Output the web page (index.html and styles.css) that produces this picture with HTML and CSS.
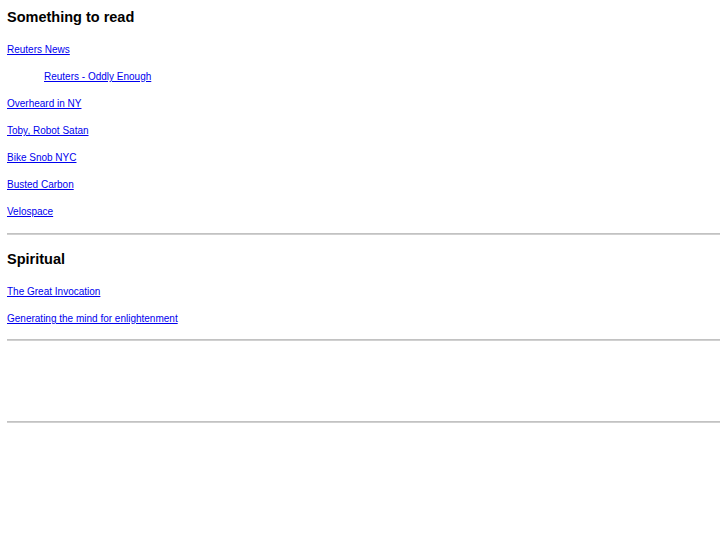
FILE: index.html
```html
<!DOCTYPE html>
<html lang="en">
<head>
    <meta charset="UTF-8">
    <meta name="viewport" content="width=device-width, initial-scale=1.0">
    <title>Links</title>
    <link rel="stylesheet" href="styles.css">
</head>
<body>
    <div class="section">
        <h2>Something to read</h2>
        <p><a href="#">Reuters News</a></p>
        <p class="sub"><a href="#">Reuters - Oddly Enough</a></p>
        <p><a href="#">Overheard in NY</a></p>
        <p><a href="#">Toby, Robot Satan</a></p>
        <p><a href="#">Bike Snob NYC</a></p>
        <p><a href="#">Busted Carbon</a></p>
        <p><a href="#">Velospace</a></p>
    </div>
    <hr>
    <div class="section">
        <h2>Spiritual</h2>
        <p><a href="#">The Great Invocation</a></p>
        <p><a href="#">Generating the mind for enlightenment</a></p>
    </div>
    <hr class="close">
    <div class="section empty"></div>
    <hr>
</body>
</html>
```

FILE: styles.css
```css
body {
    font-family: "Liberation Sans", Arial, sans-serif;
    margin: 9px 7px 8px;
    color: #000;
    background: #fff;
}
h2 {
    font-size: 14.5px;
    line-height: 17px;
    font-weight: bold;
    margin: 0 0 17px;
}
.section p {
    font-size: 10px;
    line-height: 13px;
    margin: 0 0 14px;
}
.section p:last-child {
    margin-bottom: 0;
}
.section .sub {
    padding-left: 37px;
}
a {
    color: #0000ee;
    text-decoration: underline;
}
.empty {
    height: 49px;
}
hr {
    height: 0;
    margin: 15px 0 16px;
    border: none;
    border-top: 1px solid #c2c2c2;
    border-bottom: 1px solid #d0d0d0;
}
hr.close {
    margin-top: 14px;
}
```
